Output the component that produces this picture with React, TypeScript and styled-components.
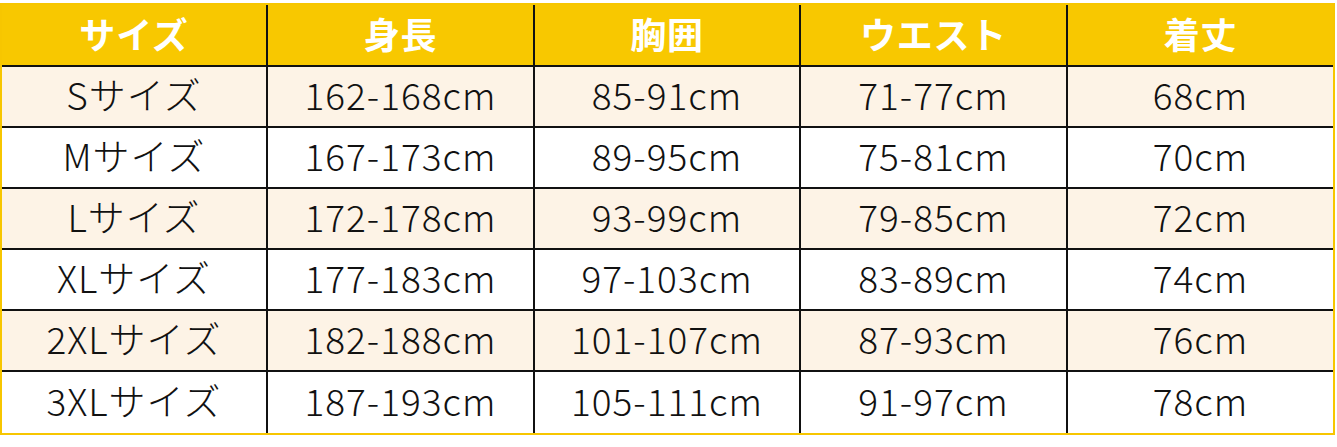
import React from 'react';
import styled, { createGlobalStyle } from 'styled-components';

const GlobalStyle = createGlobalStyle`
  html, body {
    margin: 0;
    padding: 0;
    background: #ffffff;
  }
`;

const Page = styled.div`
  padding-top: 3px;
`;

const SizeTable = styled.div`
  width: 1335px;
  box-sizing: border-box;
  border: 2px solid #f7c600;
  display: grid;
  grid-template-columns: 266px 267px 266px 267px 265px;
  font-family: 'Noto Sans CJK JP', 'Noto Sans', sans-serif;
`;

const Cell = styled.div<{ $head?: boolean; $shade?: boolean; $last?: boolean; $bottom?: boolean }>`
  display: flex;
  align-items: center;
  justify-content: center;
  box-sizing: border-box;
  height: ${(p) => (p.$head ? '62px' : '61px')};
  padding-bottom: 5px;
  border-right: ${(p) => (p.$last ? 'none' : '2px solid #111')};
  border-bottom: ${(p) => (p.$bottom ? 'none' : '2px solid #111')};
  background: ${(p) => (p.$head ? '#f8c800' : p.$shade ? '#fdf3e6' : '#ffffff')};
  color: ${(p) => (p.$head ? '#ffffff' : '#111111')};
  font-size: ${(p) => (p.$head ? '36px' : '37px')};
  font-weight: ${(p) => (p.$head ? 700 : 300)};
  letter-spacing: ${(p) => (p.$head ? '0.8px' : '1px')};
  white-space: nowrap;
`;

const headers = ['サイズ', '身長', '胸囲', 'ウエスト', '着丈'];

const rows = [
  ['Sサイズ', '162-168cm', '85-91cm', '71-77cm', '68cm'],
  ['Mサイズ', '167-173cm', '89-95cm', '75-81cm', '70cm'],
  ['Lサイズ', '172-178cm', '93-99cm', '79-85cm', '72cm'],
  ['XLサイズ', '177-183cm', '97-103cm', '83-89cm', '74cm'],
  ['2XLサイズ', '182-188cm', '101-107cm', '87-93cm', '76cm'],
  ['3XLサイズ', '187-193cm', '105-111cm', '91-97cm', '78cm'],
];

const App: React.FC = () => {
  return (
    <Page>
      <GlobalStyle />
      <SizeTable>
        {headers.map((h, i) => (
          <Cell key={h} $head $last={i === headers.length - 1}>
            {h}
          </Cell>
        ))}
        {rows.map((row, r) =>
          row.map((v, c) => (
            <Cell
              key={`${r}-${c}`}
              $shade={r % 2 === 0}
              $last={c === row.length - 1}
              $bottom={r === rows.length - 1}
            >
              {v}
            </Cell>
          ))
        )}
      </SizeTable>
    </Page>
  );
};

export default App;
